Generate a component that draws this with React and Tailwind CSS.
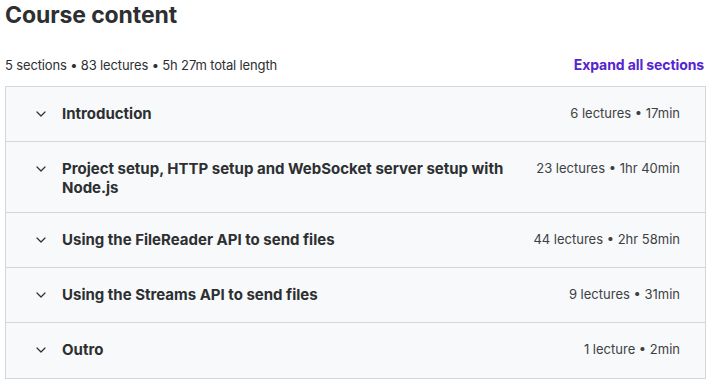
import React from "react";

const sections = [
  { title: "Introduction", meta: "6 lectures • 17min" },
  { title: "Project setup, HTTP setup and WebSocket server setup with Node.js", meta: "23 lectures • 1hr 40min" },
  { title: "Using the FileReader API to send files", meta: "44 lectures • 2hr 58min" },
  { title: "Using the Streams API to send files", meta: "9 lectures • 31min" },
  { title: "Outro", meta: "1 lecture • 2min" },
];

function Chevron() {
  return (
    <svg width="10" height="6" viewBox="0 0 10 6" fill="none" className="shrink-0 mt-[7px]">
      <polyline points="1,1 5,5 9,1" stroke="#2d2f31" strokeWidth="1.2" strokeLinecap="round" strokeLinejoin="round" />
    </svg>
  );
}

export default function App() {
  return (
    <div className="w-[710px] h-[382px] bg-white text-[#2d2f31] font-['Inter',sans-serif] overflow-hidden">
      <h2 className="pl-[5px] text-[23px] leading-[30px] font-bold tracking-[-0.1px]">Course content</h2>
      <div className="flex items-center justify-between pl-[5px] pr-[6px] mt-[26px] h-[18px]">
        <span className="text-[13px] leading-[18px] tracking-[-0.15px] text-[#2d2f31]">5 sections • 83 lectures • 5h 27m total length</span>
        <span className="text-[14px] leading-[18px] font-bold tracking-[-0.1px] text-[#5624d0]">Expand all sections</span>
      </div>
      <div className="ml-[5px] w-[701px] mt-[12px] border border-[#d1d7dc]">
        {sections.map((s, i) => (
          <div
            key={i}
            className={
              "flex items-start min-h-[55px] bg-[#f7f9fa] pl-[30px] pr-[25px] pt-[17px] pb-[15px] " +
              (i < sections.length - 1 ? "border-b border-[#d1d7dc]" : "")
            }
          >
            <Chevron />
            <div className="flex-1 ml-[16px] text-[15px] leading-[19px] font-bold">{s.title}</div>
            <div className="shrink-0 ml-[24px] text-[13px] leading-[19px] text-[#3e4143]">{s.meta}</div>
          </div>
        ))}
      </div>
    </div>
  );
}
